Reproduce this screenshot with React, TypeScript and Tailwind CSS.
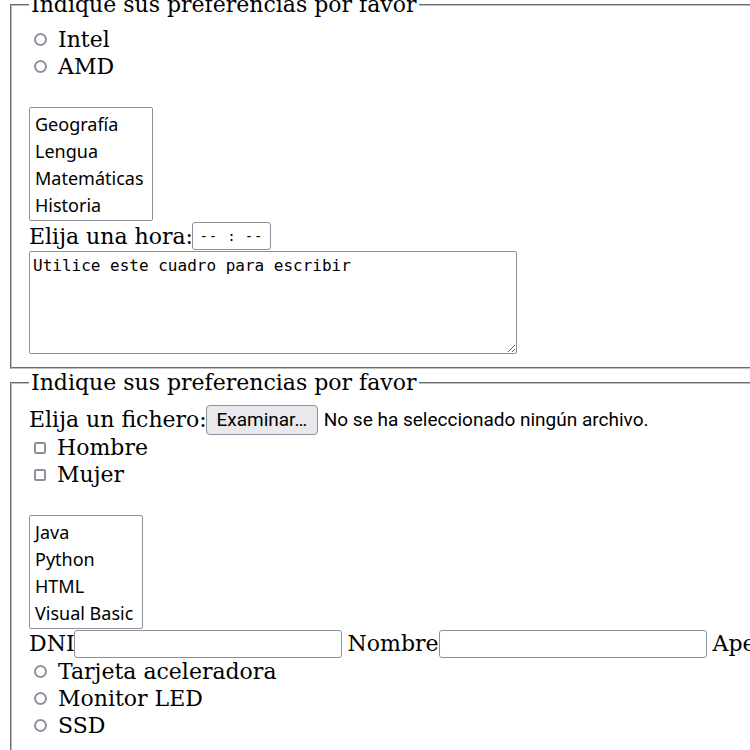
// App.tsx — formulario de preferencias (dos fieldsets)
const serif = "font-['DejaVu_Serif',serif]";
const sans = "font-['Noto_Sans','Open_Sans',sans-serif]";
const narrow = "font-['Liberation_Sans_Narrow','Roboto',sans-serif]";
const mono = "font-['DejaVu_Sans_Mono',monospace]";

const Radio = ({ label }: { label: string }) => (
  <label className="flex h-[27px] items-center whitespace-nowrap">
    <span className="ml-[5px] mr-[11px] box-border h-[13px] w-[13px] shrink-0 rounded-full border-2 border-[#8f8f9d] bg-white" />
    {label}
  </label>
);

const Check = ({ label }: { label: string }) => (
  <label className="flex h-[27px] items-center whitespace-nowrap">
    <span className="ml-[5px] mr-[11px] box-border h-[12px] w-[12px] shrink-0 rounded-[2px] border-2 border-[#8f8f9d] bg-white" />
    {label}
  </label>
);

const ListBox = ({ items, width }: { items: string[]; width: string }) => (
  <div className={`${width} ${sans} box-border rounded-[2px] border border-[#8f8f9d] bg-white pb-[1px] pt-[3px] text-[18px] text-black`}>
    {items.map((it) => (
      <div key={it} className="flex h-[27px] items-center whitespace-nowrap pl-[5px]">
        {it}
      </div>
    ))}
  </div>
);

const TextBox = () => (
  <span className="box-border inline-block h-[28px] w-[268px] rounded-[3px] border border-[#8f8f9d] bg-white" />
);

export default function App() {
  return (
    <div className={`h-[750px] w-[750px] overflow-hidden bg-white text-[22px] leading-[27px] text-black ${serif}`}>
      <div className="-mt-[9px] w-[1200px]">
        {/* primer bloque */}
        <fieldset className="ml-[10px] border-2 border-[#c0c0c0] [border-style:groove] pb-[13px] pl-[17px] pt-[8px]">
          <legend className="px-[2px] leading-[27px]">Indique sus preferencias por favor</legend>
          <Radio label="Intel" />
          <Radio label="AMD" />
          <div className="h-[27px]" />
          <ListBox items={['Geografía', 'Lengua', 'Matemáticas', 'Historia']} width="w-[124px]" />
          <div className="mt-[1px] flex h-[28px] items-center">
            <span className="-mr-[1px]">Elija una hora:</span>
            <span className={`${mono} box-border flex h-[28px] w-[79px] items-center justify-center gap-[9px] rounded-[3px] border border-[#8f8f9d] bg-white text-[14px]`}>
              <span className="tracking-[1px]">--</span>
              <span>:</span>
              <span className="tracking-[1px]">--</span>
            </span>
          </div>
          <textarea
            readOnly
            value="Utilice este cuadro para escribir"
            className={`${mono} mt-[1px] box-border block h-[103px] w-[488px] rounded-[2px] border border-[#8f8f9d] bg-white px-[3px] pt-[4px] text-[16px] leading-[19px] text-black outline-none`}
          />
        </fieldset>

        {/* segundo bloque */}
        <fieldset className="ml-[10px] border-2 border-[#c0c0c0] [border-style:groove] pb-[13px] pl-[17px] pt-[9px]">
          <legend className="px-[2px] leading-[27px]">Indique sus preferencias por favor</legend>
          <div className="flex h-[29px] items-center whitespace-nowrap">
            <span className="-mr-[1px]">Elija un fichero:</span>
            <span className={`${narrow} box-border flex h-[30px] w-[112px] items-center justify-center rounded-[4px] border border-[#8f8f9d] bg-[#e9e9ed] text-[19px]`}>
              Examinar…
            </span>
            <span className={`${narrow} ml-[6px] text-[19px]`}>No se ha seleccionado ningún archivo.</span>
          </div>
          <Check label="Hombre" />
          <Check label="Mujer" />
          <div className="h-[27px]" />
          <ListBox items={['Java', 'Python', 'HTML', 'Visual Basic']} width="w-[114px]" />
          <div className="flex h-[29px] items-center whitespace-nowrap">
            <span className="-mr-[1px]">DNI</span>
            <TextBox />
            <span className="ml-[6px]">Nombre</span>
            <TextBox />
            <span className="ml-[6px]">Apellidos</span>
            <TextBox />
          </div>
          <Radio label="Tarjeta aceleradora" />
          <Radio label="Monitor LED" />
          <Radio label="SSD" />
        </fieldset>
      </div>
    </div>
  );
}
